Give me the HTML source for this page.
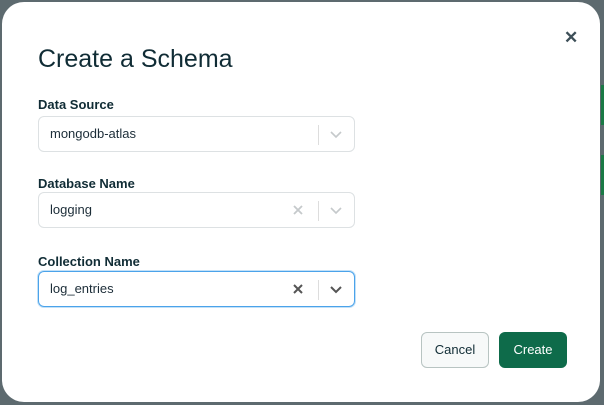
<!DOCTYPE html>
<html><head><style>
body{margin:0;width:604px;height:405px;background:#5d6a6f;position:relative;overflow:hidden;font-family:"Liberation Sans",sans-serif;}
.stripe{position:absolute;right:0;width:3px;}
.modal{position:absolute;left:2px;top:2px;width:598px;height:400px;background:#fff;border-radius:22px;}
.title{position:absolute;left:36px;top:43px;font-size:25px;color:#102c35;}
.close{position:absolute;left:562px;top:26px;font-size:17px;font-weight:bold;color:#3d4f58;}
.lbl{position:absolute;left:36px;font-size:13px;font-weight:bold;color:#102c35;}
.fld{position:absolute;left:36px;border:1px solid #dde1e3;border-radius:6px;box-sizing:border-box;width:317px;height:36px;}
.fld span{position:absolute;left:11px;top:9px;font-size:13px;color:#1c2d38;}
.sep{position:absolute;left:279px;top:8px;width:1px;height:20px;background:#ddd;}
.x{position:absolute;left:252px;top:8px;}
.chev{position:absolute;left:290px;top:13px;}
.act{border-color:#4ba3ea;box-shadow:0 0 0 1px #c3e1f8;}
.btn{position:absolute;top:330px;height:36px;border-radius:6px;box-sizing:border-box;font-size:13px;text-align:center;}
</style></head><body>
<div class="stripe" style="top:85px;height:40px;background:#1a7a45"></div>
<div class="stripe" style="top:155px;height:40px;background:#1a7a45"></div>
<div class="modal">
<div class="title">Create a Schema</div>
<div class="close">✕</div>
<div class="lbl" style="top:95px">Data Source</div>
<div class="fld" style="top:114px"><span>mongodb-atlas</span><div class="sep"></div>
<svg class="chev" width="14" height="10" viewBox="0 0 14 10"><path d="M2 2l5 5 5-5" fill="none" stroke="#c5c9cb" stroke-width="1.6"/></svg></div>
<div class="lbl" style="top:174px">Database Name</div>
<div class="fld" style="top:190px"><span>logging</span>
<svg class="x" width="14" height="18" viewBox="0 0 14 18"><path d="M3 5l8 8M11 5l-8 8" stroke="#c5c9cb" stroke-width="1.8"/></svg><div class="sep"></div>
<svg class="chev" width="14" height="10" viewBox="0 0 14 10"><path d="M2 2l5 5 5-5" fill="none" stroke="#c5c9cb" stroke-width="1.6"/></svg></div>
<div class="lbl" style="top:252px">Collection Name</div>
<div class="fld act" style="top:269px"><span>log_entries</span>
<svg class="x" width="14" height="18" viewBox="0 0 14 18"><path d="M3 5l8 8M11 5l-8 8" stroke="#555" stroke-width="2"/></svg><div class="sep"></div>
<svg class="chev" width="14" height="10" viewBox="0 0 14 10"><path d="M2 2l5 5 5-5" fill="none" stroke="#555" stroke-width="2"/></svg></div>
<div class="btn" style="left:419px;width:68px;border:1px solid #b8c4c2;background:#f7f9f9;color:#102c35;line-height:34px">Cancel</div>
<div class="btn" style="left:497px;width:68px;background:#0e6b4a;color:#fff;line-height:36px">Create</div>
</div>
</body></html>
